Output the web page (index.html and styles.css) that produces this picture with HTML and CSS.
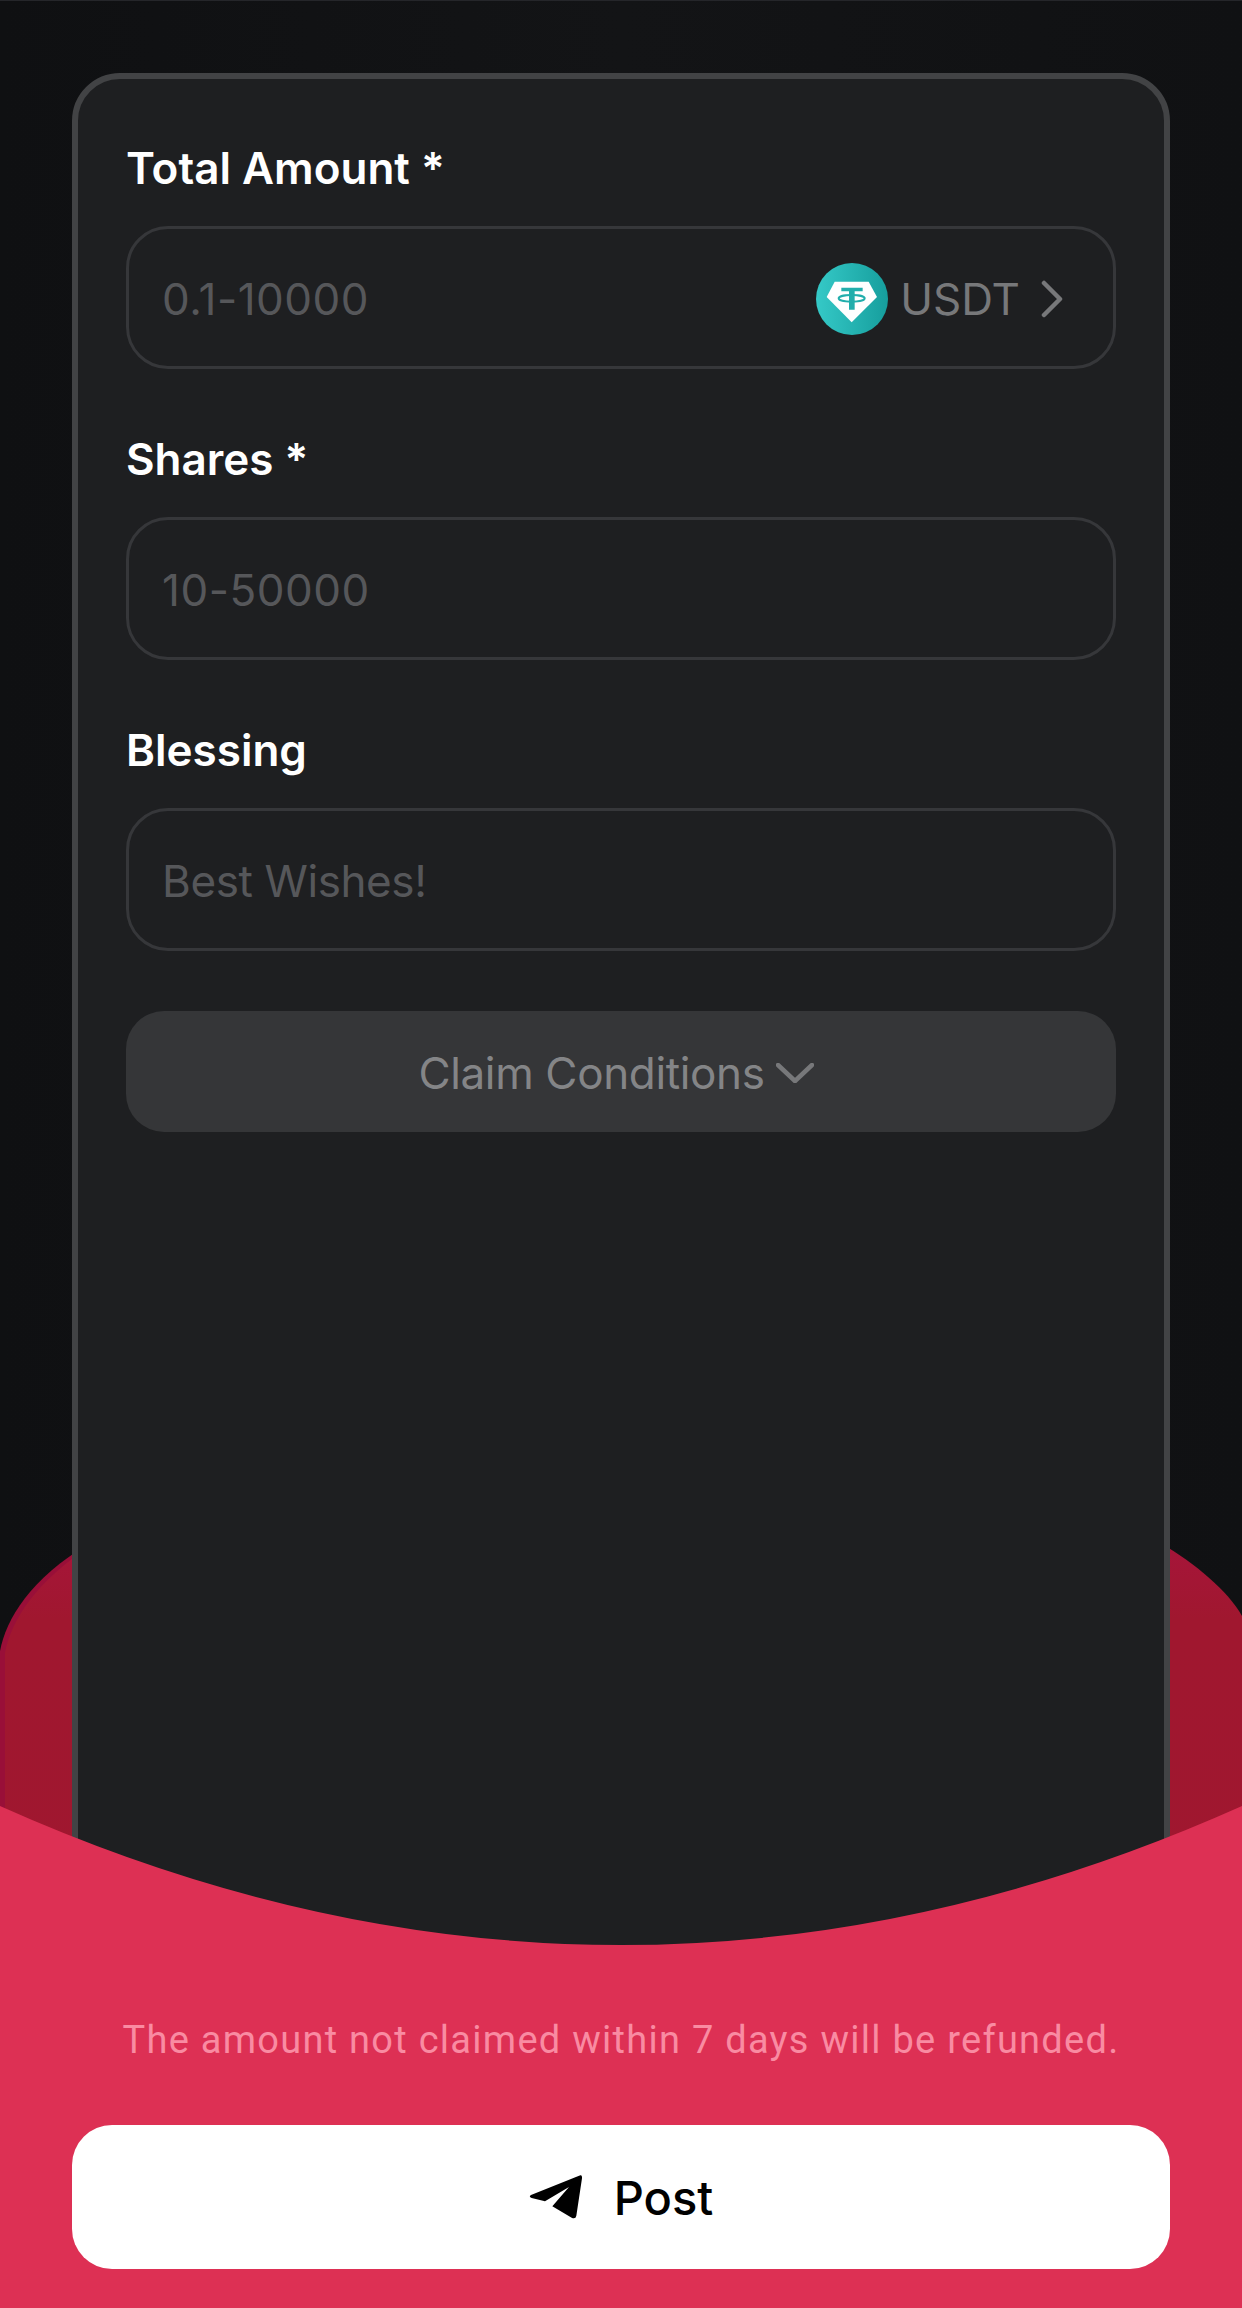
FILE: index.html
```html
<!DOCTYPE html>
<html lang="en">
<head>
<meta charset="utf-8">
<title>Post</title>
<link rel="stylesheet" href="styles.css">
</head>
<body>
<main class="stage">
  <svg class="back-shape" viewBox="0 0 1242 758" aria-hidden="true">
    <defs>
      <linearGradient id="backfill" x1="0" y1="0" x2="0" y2="1">
        <stop offset="0" stop-color="#a6153a"/>
        <stop offset="0.1" stop-color="#a0172f"/>
        <stop offset="1" stop-color="#9f1730"/>
      </linearGradient>
    </defs>
    <path class="back-rim" d="M0 758V102C6 70 30 30 90 -6H600V758Z"/>
    <path class="back-fill" d="M5 758V104C11 72 35 32 95 -6H1160C1195 14 1228 42 1242 67V758Z"/>
  </svg>
  <section class="card">
    <div class="field">
      <div class="label">Total Amount *</div>
      <div class="input">
        <span class="placeholder digits">0.1-10000</span>
        <div class="token">
          <svg class="token-icon" viewBox="172 126 216 216" aria-hidden="true">
            <defs>
              <linearGradient id="teal" x1="0" y1="0" x2="1" y2="0">
                <stop offset="0" stop-color="#35c9c7"/>
                <stop offset="1" stop-color="#169e9d"/>
              </linearGradient>
            </defs>
            <circle cx="280" cy="234" r="108" fill="url(#teal)"/>
            <path d="M228 182H330L355 228L279 304L204 228Z" fill="#fff"/>
            <path d="M248 200H312V211H288V266H271V211H248Z" fill="#22aeac"/>
            <ellipse cx="279" cy="232" rx="39" ry="10" fill="none" stroke="#22aeac" stroke-width="6"/>
          </svg>
          <span class="token-name">USDT</span>
          <svg class="chevron-right" viewBox="0 0 22 38" aria-hidden="true"><path d="M3 3L19 19L3 35"/></svg>
        </div>
      </div>
    </div>
    <div class="field">
      <div class="label">Shares *</div>
      <div class="input"><span class="placeholder digits">10-50000</span></div>
    </div>
    <div class="field">
      <div class="label">Blessing</div>
      <div class="input"><span class="placeholder words">Best Wishes!</span></div>
    </div>
    <div class="conditions">
      <span class="conditions-text">Claim Conditions</span>
      <svg class="chevron-down" viewBox="0 0 38 20" aria-hidden="true"><path d="M2 2L19 18L36 2"/></svg>
    </div>
  </section>
  <footer class="footer">
    <svg class="wave" viewBox="0 0 1242 140" preserveAspectRatio="none" aria-hidden="true">
      <path d="M0 0Q621 280 1242 0V140H0Z"/>
    </svg>
    <div class="footer-body">
      <p class="note">The amount not claimed within 7 days will be refunded.</p>
      <div class="post">
        <svg class="post-icon" viewBox="150 140 162 135" aria-hidden="true">
          <path d="M304 141L156 200Q148 205 158 209L198 219L270 176L220 234L278 268Q290 273 292 262L309 150Q310 140 304 141Z"/>
        </svg>
        <span>Post</span>
      </div>
    </div>
  </footer>
</main>
</body>
</html>
```

FILE: styles.css
```css
* { box-sizing: border-box; }
html, body { margin: 0; padding: 0; }
body {
  background: #111214;
  font-family: Inter, "Liberation Sans", sans-serif;
}
.stage {
  position: relative;
  width: 1242px;
  height: 2308px;
  padding: 72px 72px 0;
  overflow: hidden;
  background: linear-gradient(90deg, #0f1012 0, #131416 50%, #101113 100%);
  border-top: 1px solid #25262a;
}
.back-shape {
  position: absolute;
  left: 0;
  top: 1548px;
  width: 1242px;
  height: 758px;
  overflow: visible;
}
.back-rim { fill: #990f38; }
.back-fill { fill: url(#backfill); }
.card {
  position: relative;
  display: flex;
  flex-direction: column;
  gap: 60px;
  height: 1960px;
  padding: 59px 48px 0;
  background: #1e1f21;
  border: 6px solid #424345;
  border-radius: 48px;
}
.field {
  display: flex;
  flex-direction: column;
  gap: 28px;
}
.label {
  color: #fff;
  font-size: 44px;
  line-height: 60px;
  font-weight: 600;
}
.input {
  display: flex;
  align-items: center;
  justify-content: space-between;
  height: 143px;
  padding: 2px 50px 0 33px;
  border: 3px solid #36373a;
  border-radius: 42px;
}
.placeholder {
  color: #56575a;
  font-size: 44px;
}
.digits { letter-spacing: 0.5px; }
.words { letter-spacing: -0.4px; }
.token {
  display: flex;
  align-items: center;
}
.token-icon {
  width: 72px;
  height: 72px;
  margin-right: 12px;
}
.token-name {
  color: #77787a;
  font-size: 44px;
}
.chevron-right {
  width: 22px;
  height: 38px;
  margin-left: 21px;
}
.chevron-right path, .chevron-down path {
  fill: none;
  stroke: #77787a;
  stroke-width: 4.5px;
  stroke-linecap: round;
  stroke-linejoin: round;
}
.conditions {
  display: flex;
  align-items: center;
  justify-content: center;
  gap: 11px;
  height: 121px;
  padding-top: 2px;
  background: #353638;
  border-radius: 38px;
  color: #848587;
  font-size: 44px;
}
.conditions-text { letter-spacing: -0.35px; }
.chevron-down {
  width: 38px;
  height: 20px;
  margin-right: 10px;
}
.footer {
  position: absolute;
  left: 0;
  top: 1805px;
  width: 1242px;
  height: 503px;
}
.wave {
  display: block;
  width: 1242px;
  height: 139px;
}
.wave path { fill: #dd3054; }
.footer-body {
  display: flex;
  flex-direction: column;
  align-items: center;
  height: 364px;
  background: #dd3054;
}
.note {
  margin: 71px 0 0;
  color: #f98ba2;
  font-family: Roboto, "Liberation Sans", sans-serif;
  font-size: 38px;
  line-height: 48px;
  letter-spacing: 1.27px;
  white-space: nowrap;
}
.post {
  display: flex;
  align-items: center;
  justify-content: center;
  gap: 31px;
  width: 1098px;
  height: 144px;
  margin-top: 61px;
  background: #fff;
  border-radius: 40px;
  color: #000;
  font-size: 47px;
  font-weight: 500;
}
.post-icon {
  width: 54px;
  height: 45px;
}
.post-icon path { fill: #000; }
```
